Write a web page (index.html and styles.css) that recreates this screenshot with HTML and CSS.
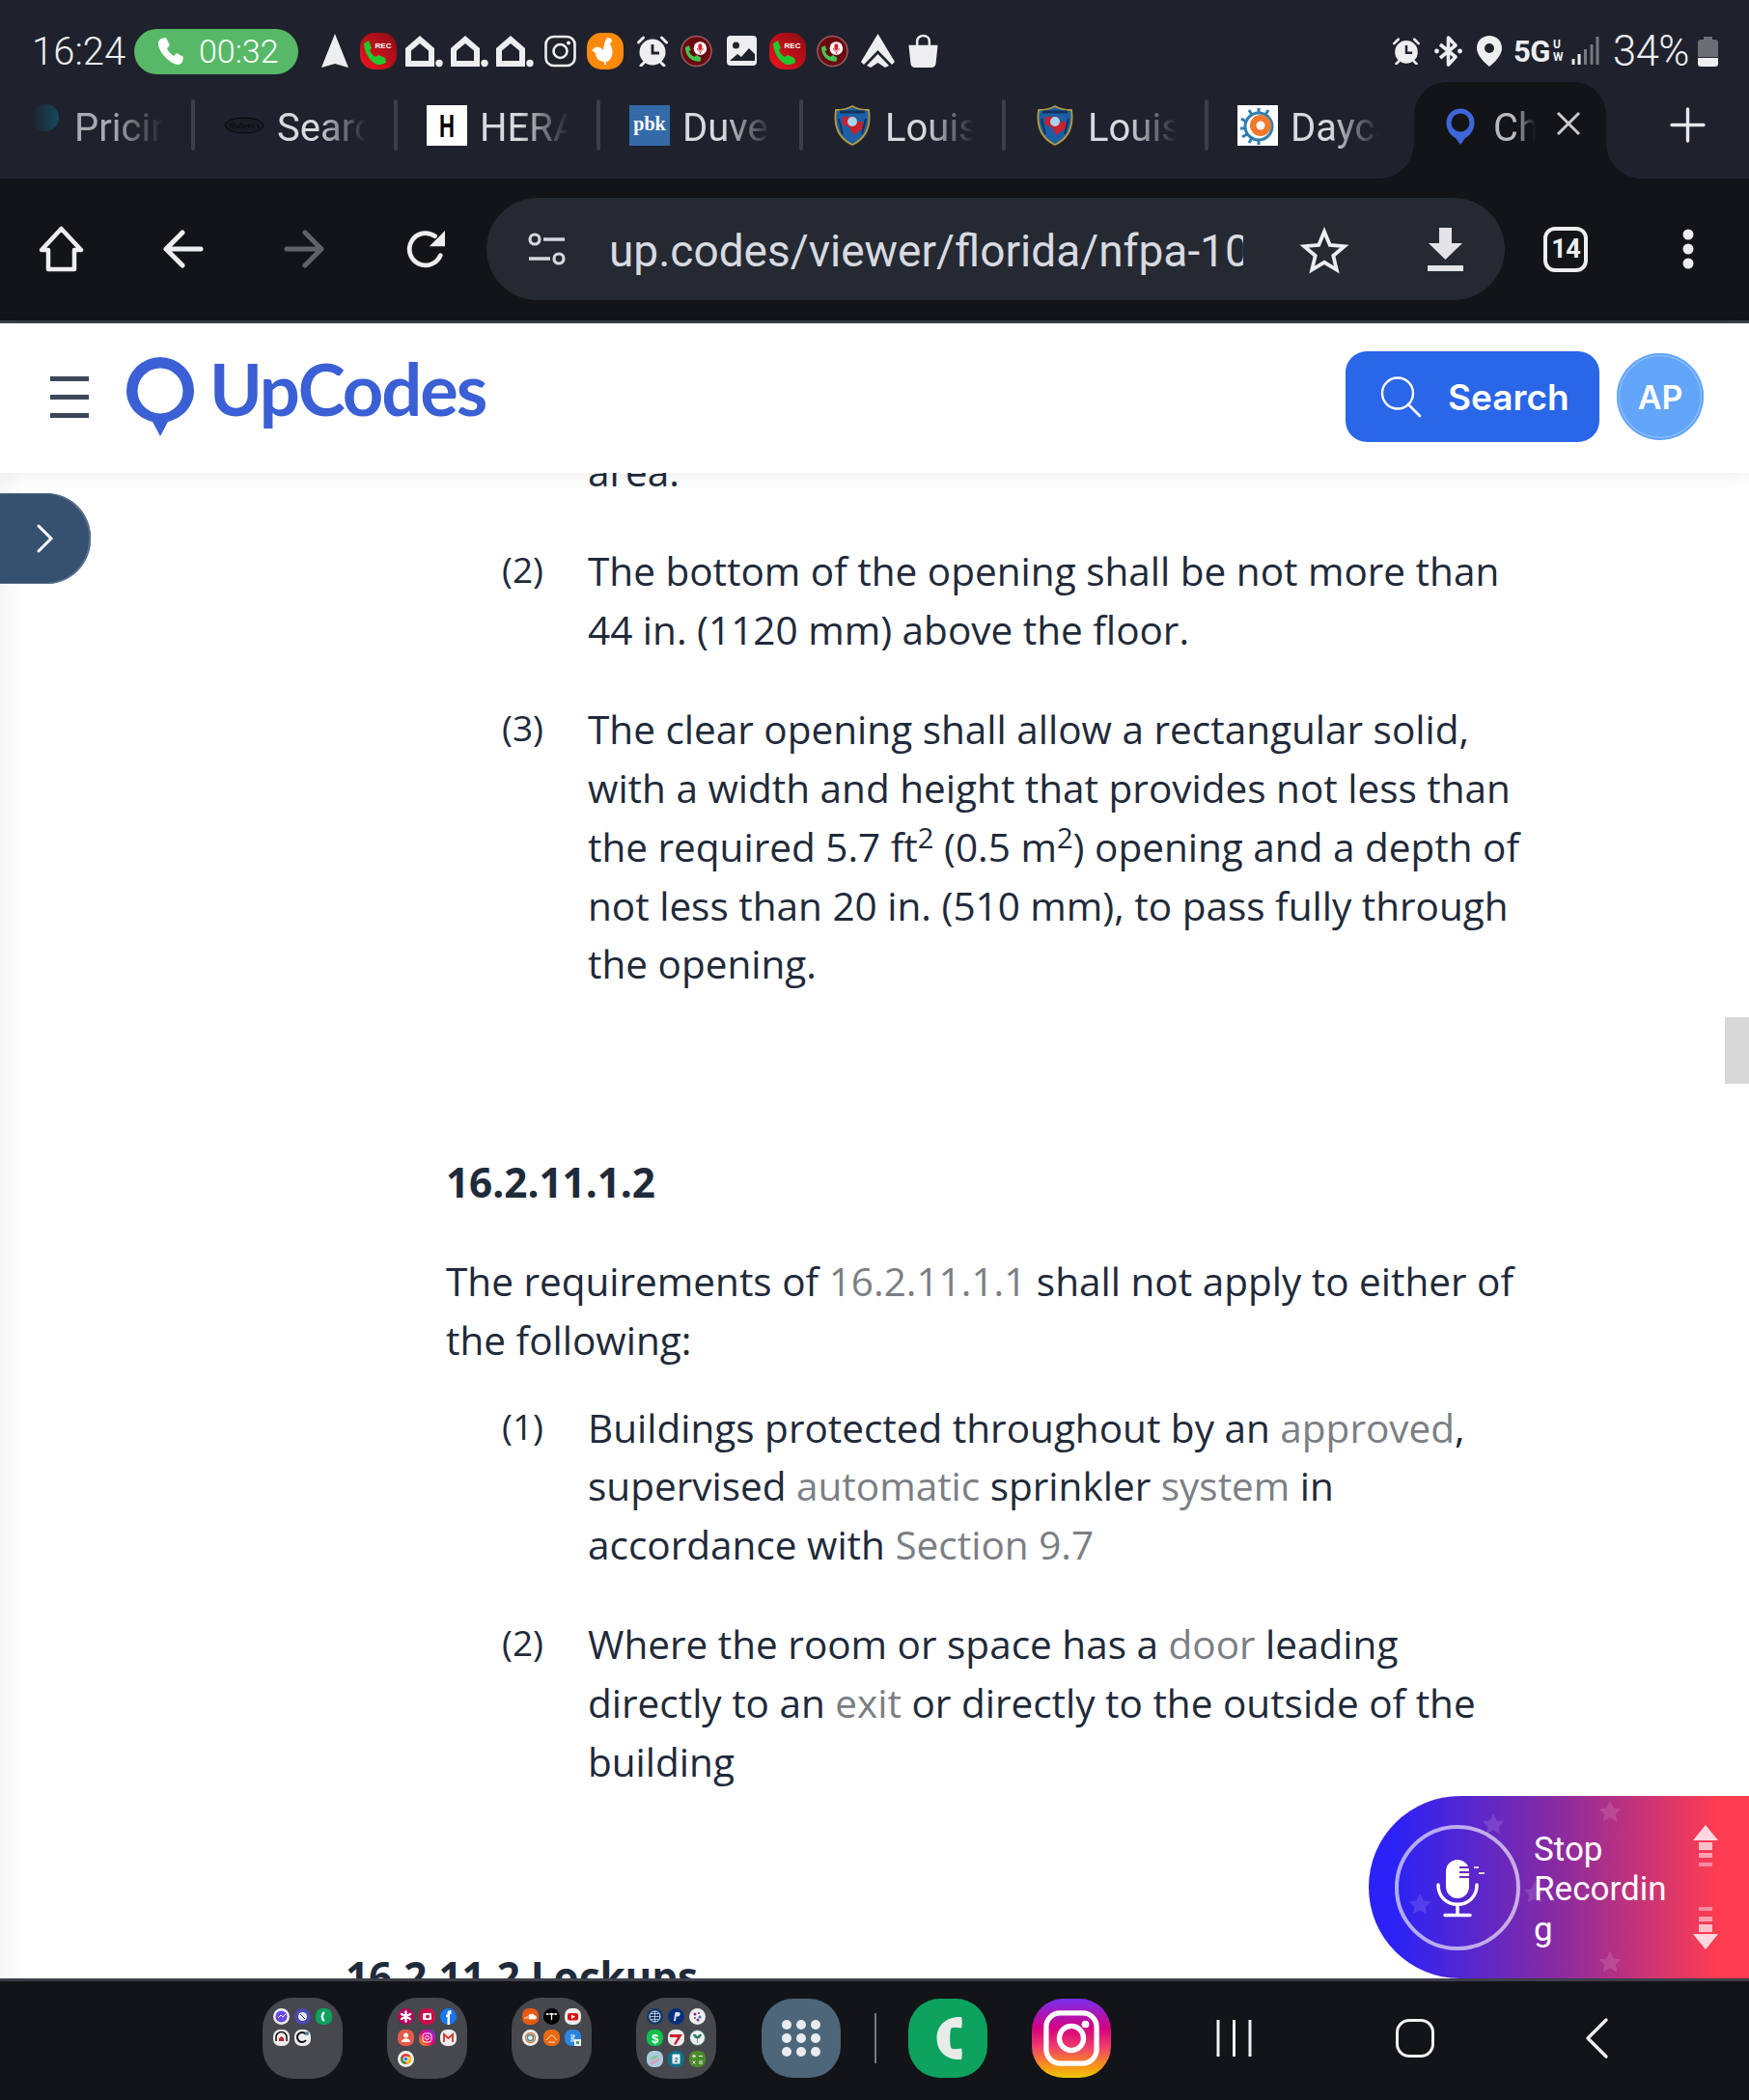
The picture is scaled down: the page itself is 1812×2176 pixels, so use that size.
FILE: index.html
```html
<!DOCTYPE html>
<html lang="en">
<head>
<meta charset="utf-8">
<title>UpCodes</title>
<link rel="stylesheet" href="styles.css">
</head>
<body>
<svg class="sprite" aria-hidden="true">
  <defs>
    <linearGradient id="redg" x1="0" y1="1" x2="1" y2="0"><stop offset="0" stop-color="#f01420"/><stop offset="1" stop-color="#8a0c14"/></linearGradient>
    <linearGradient id="igg" x1="0" y1="1" x2="1" y2="0"><stop offset="0" stop-color="#f5b400"/><stop offset=".5" stop-color="#e6007e"/><stop offset="1" stop-color="#7a2ff0"/></linearGradient>
    <symbol id="rec" viewBox="0 0 38 38"><rect width="38" height="38" rx="15" fill="url(#redg)"/><path d="M4 11l5-3 3 8-2 2c1 3 3 5 6 7l3-2 7 3 1 5-6 2C14 34 5 24 4 11z" fill="#22c92c"/><text x="24" y="16" font-family="Liberation Sans" font-weight="700" font-size="8" fill="#fff" text-anchor="middle">REC</text></symbol>
    <symbol id="hut" viewBox="0 0 39 33"><path fill="#eeeef0" fill-rule="evenodd" d="M0 32V13L15 0l15 13v19zM6 26h18V15.500L15 8 6 15.500z"/><circle cx="35" cy="28.500" r="3.700" fill="#eeeef0"/></symbol>
    <symbol id="alarm" viewBox="0 0 32 32"><circle cx="16" cy="17" r="13.500" fill="#eeeef0"/><path d="M1.500 7l5-5M30.500 7l-5-5M4 31l3-3M28 31l-3-3" stroke="#eeeef0" stroke-width="3" stroke-linecap="round"/><path d="M16 9v9h7" fill="none" stroke="#1f222c" stroke-width="2.800"/></symbol>
    <symbol id="redcall" viewBox="0 0 34 34"><circle cx="17" cy="17" r="16" fill="#6a0a0f" stroke="#9a5a5e" stroke-width="1.600"/><path d="M5 13l4-2 2 5-2 1c1 3 3 5 6 6l2-2 5 3-1 4C12 29 5 22 5 13z" fill="#3fc653"/><circle cx="21" cy="14" r="7" fill="#fff"/><rect x="19" y="9" width="4" height="7" rx="2" fill="#d8202a"/><path d="M18 14c0 4 6 4 6 0M21 18v2" fill="none" stroke="#d8202a" stroke-width="1"/></symbol>
    <symbol id="shield" viewBox="0 0 38 42"><path d="M19 1c5 3 11 4 17 4 2 14 0 28-17 36C2 33 0 19 2 5c6 0 12-1 17-4z" fill="#1c5fa6" stroke="#b69a3a" stroke-width="1.800"/><path d="M9 12h13l2 5h6v7l-6 4-4 3-4-8-7-3z" fill="#c8202c"/><circle cx="19" cy="17" r="5" fill="#a8d4ea"/><path d="M6 7h26" stroke="#12325a" stroke-width="3"/><path d="M5 14l4 16M33 14l-4 16" stroke="#12325a" stroke-width="2"/></symbol>
    <symbol id="back" viewBox="0 0 43 40"><path d="M40 20H4M21 3L4 20l17 17" fill="none" stroke="currentColor" stroke-width="5" stroke-linecap="round" stroke-linejoin="round"/></symbol>
    <symbol id="star" viewBox="0 0 17 17"><path d="M8.500 2l2 4.500 4.500.5-3.300 3 1 4.500-4.200-2.400-4.200 2.400 1-4.500L2 7l4.500-.5z"/></symbol>
  </defs>
</svg>

<header class="status">
  <span class="clock">16:24</span>
  <span class="call-pill">
    <svg class="call-icon" viewBox="0 0 30 30"><path d="M6 2l5-1 4 8-3 3c1 3 4 6 7 8l3-3 7 4-1 5c-1 2-3 3-5 3C13 27 3 15 3 7c0-2 1-4 3-5z" fill="#fff"/></svg>
    <span>00:32</span>
  </span>
  <div class="notif">
    <svg class="i30" viewBox="0 0 30 36"><path d="M15 0l14 35-14-4-14 4z" fill="#eeeef0"/></svg>
    <svg class="i38"><use href="#rec"/></svg>
    <svg class="ihut"><use href="#hut"/></svg>
    <svg class="ihut"><use href="#hut"/></svg>
    <svg class="ihut"><use href="#hut"/></svg>
    <svg class="i33" viewBox="0 0 33 33"><rect x="1.500" y="1.500" width="30" height="30" rx="8" fill="none" stroke="#eeeef0" stroke-width="2.600"/><circle cx="16.500" cy="16.500" r="7" fill="none" stroke="#eeeef0" stroke-width="2.600"/><circle cx="25" cy="8" r="2" fill="#eeeef0"/></svg>
    <svg class="i38" viewBox="0 0 38 38"><rect width="38" height="38" rx="15" fill="#ff8a0a"/><path d="M21 5l4 1 1 3-2 2c2 5 4 10 1 15-2 3-4 4-5 4v3h-2v-3c-5 0-9-4-9-9l-4-3 4-3c3-1 6 0 8 3 1-5 1-9 4-13z" fill="#fff"/></svg>
    <svg class="i32"><use href="#alarm"/></svg>
    <svg class="i33"><use href="#redcall"/></svg>
    <svg class="i32" viewBox="0 0 32 32"><rect width="31" height="31" rx="4" fill="#eeeef0"/><circle cx="9.500" cy="10" r="3.500" fill="#1f222c"/><path d="M3 26l8-7 4 3 8-9 6 6v7z" fill="#1f222c"/></svg>
    <svg class="i38"><use href="#rec"/></svg>
    <svg class="i33"><use href="#redcall"/></svg>
    <svg class="i37" viewBox="0 0 37 37"><path d="M18.500 0L36 29l-3 3-14.500-15L4 32l-3-3z" fill="#eeeef0"/><path d="M18.500 21L30 33l-4 2-7.500-5-7.500 5-4-2z" fill="#eeeef0"/></svg>
    <svg class="i33" viewBox="0 0 33 35"><path d="M1 11h31l-2 19c0 3-2 5-5 5H8c-3 0-5-2-5-5z" fill="#eeeef0"/><path d="M10 13V7c0-8 13-8 13 0v6" fill="none" stroke="#eeeef0" stroke-width="2.600"/></svg>
  </div>
  <div class="sys">
    <svg class="i28" viewBox="0 0 32 32"><use href="#alarm"/></svg>
    <svg class="i29" viewBox="0 0 29 32"><path d="M6 9l16 13-7.500 8V2l7.500 8L6 23" fill="none" stroke="#eeeef0" stroke-width="3.600" stroke-linejoin="round"/><circle cx="2.500" cy="16" r="2.400" fill="#eeeef0"/><circle cx="26.500" cy="16" r="2.400" fill="#eeeef0"/></svg>
    <svg class="i26" viewBox="0 0 26 32"><path fill="#eeeef0" fill-rule="evenodd" d="M13 0c7 0 13 5 13 13 0 7-7 14-13 19C7 27 0 20 0 13 0 5 6 0 13 0zm0 8a5 5 0 100 10 5 5 0 000-10z"/></svg>
    <span class="fiveg">5G</span>
    <span class="uw">U<br>W</span>
    <svg class="i28" viewBox="0 0 28 30"><g stroke-width="3"><path d="M2 29v-6M8 29V18" stroke="#eeeef0"/><path d="M14.500 29V13M21 29V8M27 29V0" stroke="#77797f"/></g></svg>
    <span class="batt-text">34%</span>
    <svg class="batt" viewBox="0 0 21 31"><path d="M6 0h9v3h3c2 0 3 1 3 3v15H0V6c0-2 1-3 3-3h3z" fill="#6c6e76"/><path d="M0 22h21v6c0 2-1 3-3 3H3c-2 0-3-1-3-3z" fill="#eeeef0"/></svg>
  </div>
</header>

<nav class="tabs">
  <div class="tab tab-dim"><svg class="favicon" viewBox="0 0 42 42"><defs><linearGradient id="fd" x1="1" x2="0"><stop offset="0" stop-color="#114a5c"/><stop offset="1" stop-color="#1f222c"/></linearGradient></defs><circle cx="25" cy="13" r="14" fill="url(#fd)"/></svg><span class="tab-title">Pricing</span></div>
  <div class="tab"><svg class="favicon" viewBox="0 0 42 42"><ellipse cx="21" cy="21" rx="20" ry="8" fill="#1b1d25" stroke="#05060a"/><text x="21" y="23.500" font-family="Liberation Serif" font-size="8" fill="#05060a" text-anchor="middle">Shaheen's</text></svg><span class="tab-title">Search</span></div>
  <div class="tab"><svg class="favicon" viewBox="0 0 42 42"><rect width="42" height="42" fill="#fff"/><text x="21" y="33" font-family="Liberation Sans" font-weight="700" font-size="34" fill="#000" text-anchor="middle" textLength="16" lengthAdjust="spacingAndGlyphs">H</text></svg><span class="tab-title">HERALD</span></div>
  <div class="tab"><svg class="favicon" viewBox="0 0 42 42"><rect width="42" height="42" fill="#346aa8"/><text x="21" y="26" font-family="Liberation Serif" font-weight="700" font-size="20" fill="#fff" text-anchor="middle">pbk</text></svg><span class="tab-title">Duvel</span></div>
  <div class="tab"><svg class="favicon"><use href="#shield"/></svg><span class="tab-title">Louisiana</span></div>
  <div class="tab"><svg class="favicon"><use href="#shield"/></svg><span class="tab-title">Louisiana</span></div>
  <div class="tab tab-last"><svg class="favicon" viewBox="0 0 42 42"><rect width="42" height="42" fill="#fff"/><circle cx="22" cy="22" r="14" fill="none" stroke="#2f7fb0" stroke-width="3"/><path d="M22 3v6M12 5l3 5M32 5l-3 5M4 14l5 3M3 24h6M5 33l5-3M12 39l3-5M22 41v-6" stroke="#2f7fb0" stroke-width="3"/><circle cx="24" cy="21" r="11" fill="#f07a2a"/><circle cx="24" cy="21" r="4.500" fill="#fff"/></svg><span class="tab-title">Daycare</span></div>
  <div class="tab-active">
    <svg class="active-pin" viewBox="0 0 32 40"><path d="M16 39l-5-7C5 29 1.500 23 1.500 16a14.500 14.500 0 0129 0c0 7-3.500 13-9.500 16z" fill="#3f66d8"/><circle cx="16" cy="16" r="9.500" fill="#121418"/></svg>
    <span class="tab-title active-title">Check</span>
    <svg class="close" viewBox="0 0 26 26"><path d="M2 2l22 22M24 2L2 24" stroke="#c9cbd0" stroke-width="3"/></svg>
  </div>
  <svg class="plus" viewBox="0 0 35 35"><path d="M17.500 1v33M1 17.500h33" stroke="#e8e8ea" stroke-width="3.400" stroke-linecap="round"/></svg>
</nav>

<div class="toolbar">
  <span class="slot"><svg class="tb47" viewBox="0 0 47 48"><path d="M23.500 3L44 25h-7v20H10V25H3z" fill="none" stroke="#eeeef0" stroke-width="4.500" stroke-linejoin="round"/></svg></span>
  <span class="slot"><svg class="tb43"><use href="#back"/></svg></span>
  <span class="slot slot-dim"><svg class="tb43 flip"><use href="#back"/></svg></span>
  <span class="slot"><svg class="tb43" viewBox="0 0 43 42"><path d="M37 28A17.500 17.500 0 1131 7" fill="none" stroke="#eeeef0" stroke-width="5" stroke-linecap="round"/><path d="M42 1v17H25z" fill="#eeeef0"/></svg></span>
  <div class="address">
    <svg class="site" viewBox="0 0 39 34"><circle cx="7" cy="7" r="5" fill="none" stroke="#d6d8de" stroke-width="3.200"/><path d="M16 7h22M1 27h22" stroke="#d6d8de" stroke-width="3.600"/><circle cx="32" cy="27" r="5" fill="none" stroke="#d6d8de" stroke-width="3.200"/></svg>
    <span class="url">up.codes/viewer/florida/nfpa-101</span>
    <svg class="addr-star" viewBox="0 0 46 44"><path d="M23 4l5.800 14 15 1.200-11.500 9.800 3.500 14.600L23 35.800 10.200 43.600l3.500-14.600L2.200 19.200l15-1.200z" fill="none" stroke="#eeeef0" stroke-width="3.800" stroke-linejoin="miter"/></svg>
    <svg class="addr-dl" viewBox="0 0 37 45"><path d="M12 0h13v16h11L18.500 33 1 16h11zM0 39h37v6H0z" fill="#e4e4e8"/></svg>
  </div>
  <span class="slot"><span class="tab-count">14</span></span>
  <span class="slot"><svg class="dots" viewBox="0 0 12 42"><circle cx="6" cy="6" r="5.500"/><circle cx="6" cy="21" r="5.500"/><circle cx="6" cy="36" r="5.500"/></svg></span>
</div>
<div class="rule"></div>

<header class="site-head">
  <div class="burger"><i></i><i></i><i></i></div>
  <svg class="logo-pin" viewBox="0 0 70 82"><path d="M35 82l-8-15C11 63 0 50 0 35a35 35 0 0170 0c0 15-11 28-27 32z" fill="#3b5fd4"/><circle cx="35" cy="35" r="23.500" fill="#fff"/></svg>
  <span class="wordmark">UpCodes</span>
  <button class="search-btn"><svg class="search-icon" viewBox="0 0 42 42"><circle cx="18" cy="17.500" r="16" fill="none" stroke="#fff" stroke-width="2.400"/><path d="M29 29l12 12" stroke="#fff" stroke-width="2.600" stroke-linecap="round"/></svg>Search</button>
  <span class="avatar">AP</span>
</header>

<main class="main">
  <article class="article">
    <ol class="clause first">
      <li class="item item-cont"><span class="item-text">area.</span></li>
      <li class="item"><span class="item-label">(2)</span><span class="item-text">The bottom of the opening shall be not more than 44 in. (1120 mm) above the floor.</span></li>
      <li class="item"><span class="item-label">(3)</span><span class="item-text">The clear opening shall allow a rectangular solid, with a width and height that provides not less than the required 5.7 ft<sup>2</sup> (0.5 m<sup>2</sup>) opening and a depth of not less than 20 in. (510 mm), to pass fully through the opening.</span></li>
    </ol>
    <h3 class="sec-title">16.2.11.1.2</h3>
    <p class="para">The requirements of <a class="ref">16.2.11.1.1</a> shall not apply to either of the following:</p>
    <ol class="clause">
      <li class="item"><span class="item-label">(1)</span><span class="item-text">Buildings protected throughout by an <a class="ref">approved</a>, supervised <a class="ref">automatic</a> sprinkler <a class="ref">system</a> in accordance with <a class="ref">Section 9.7</a></span></li>
      <li class="item"><span class="item-label">(2)</span><span class="item-text">Where the room or space has a <a class="ref">door</a> leading directly to an <a class="ref">exit</a> or directly to the outside of the building</span></li>
    </ol>
    <h2 class="next-title">16.2.11.2 Lockups</h2>
  </article>

  <div class="side-toggle"><svg viewBox="0 0 17 30"><path d="M2 2l13 13L2 28" fill="none" stroke="#fff" stroke-width="3" stroke-linecap="round"/></svg></div>
  <div class="scroll-thumb"></div>

  <aside class="recorder">
    <svg class="rec-stars" viewBox="0 0 394 189">
      <g fill="#fff" fill-opacity=".13">
        <use href="#star" x="114" y="14" width="30" height="30"/>
        <use href="#star" x="235" y="1" width="30" height="30"/>
        <use href="#star" x="38" y="97" width="30" height="30"/>
        <use href="#star" x="157" y="85" width="30" height="30"/>
        <use href="#star" x="235" y="157" width="30" height="30"/>
      </g>
    </svg>
    <div class="rec-ring">
      <svg viewBox="0 0 50 60" class="rec-mic"><rect x="10" y="1" width="24" height="40" rx="12" fill="#fff"/><path d="M24 9h10M24 14h10M24 19h10" stroke="#6a28b8" stroke-width="2"/><path d="M2 27c0 27 40 27 40 0" fill="none" stroke="#fff" stroke-width="3.500" stroke-linecap="round"/><path d="M22 48v10M9 58.500h26" stroke="#fff" stroke-width="3.500" stroke-linecap="round"/><path d="M39 9h5M44 15h6" stroke="#fff" stroke-opacity=".8" stroke-width="2"/></svg>
    </div>
    <span class="rec-text">Stop Recording</span>
    <div class="rec-arrows">
      <svg viewBox="0 0 26 45"><path d="M13 0l13 16H0z" fill="#ffd8df"/><path d="M6 18h14v8H6z" fill="#ffc0cb"/><path d="M6 29h14v5H6z" fill="#ff9fb0"/><path d="M6 39h14v4H6z" fill="#f88ba0"/></svg>
      <svg viewBox="0 0 26 45"><path d="M13 45L0 29h26z" fill="#ffd8df"/><path d="M6 19h14v8H6z" fill="#ffc0cb"/><path d="M6 11h14v5H6z" fill="#ff9fb0"/><path d="M6 1h14v4H6z" fill="#f88ba0"/></svg>
    </div>
  </aside>
</main>

<footer class="dock">
  <div class="folder">
    <svg class="mini" viewBox="0 0 17 17"><circle cx="8.500" cy="8.500" r="8.500" fill="#ededed"/><circle cx="8.500" cy="8.500" r="6" fill="#6a4ae8"/><path d="M5 10l3-3 2 2 3-3" stroke="#fff" fill="none"/></svg>
    <svg class="mini" viewBox="0 0 17 17"><circle cx="8.500" cy="8.500" r="8.500" fill="#4a4ab0"/><circle cx="8.500" cy="8.500" r="4.500" fill="#e8e8f0"/><path d="M6 6l5 5" stroke="#30306a"/></svg>
    <svg class="mini" viewBox="0 0 17 17"><rect width="17" height="17" rx="7" fill="#0da25e"/><path d="M9 4c-3 2-3 7 0 9" stroke="#fff" stroke-width="2.400" fill="none"/></svg>
    <svg class="mini" viewBox="0 0 17 17"><rect width="17" height="17" rx="7" fill="#eee"/><path d="M3 12V8a5.500 5.500 0 0111 0v4" fill="none" stroke="#111" stroke-width="1.500"/><path d="M6 12V9l2.500-2L11 9v3z" fill="#c8202c"/></svg>
    <svg class="mini" viewBox="0 0 17 17"><rect width="17" height="17" rx="7" fill="#eee"/><path d="M12 5a5 5 0 100 6" fill="none" stroke="#111" stroke-width="2"/><circle cx="13" cy="4" r="2" fill="#48a"/></svg>
  </div>
  <div class="folder">
    <svg class="mini" viewBox="0 0 17 17"><circle cx="8.500" cy="8.500" r="8.500" fill="#b8005e"/><path d="M8.500 3.500v10M4 6l9 5M13 6l-9 5" stroke="#fff" stroke-width="2.400" stroke-linecap="round"/></svg>
    <svg class="mini" viewBox="0 0 17 17"><rect width="17" height="17" rx="7" fill="#c8104a"/><rect x="4" y="5" width="9" height="7" rx="1.500" fill="#fff"/><circle cx="9" cy="8.500" r="2" fill="#c8104a"/></svg>
    <svg class="mini" viewBox="0 0 17 17"><circle cx="8.500" cy="8.500" r="8.500" fill="#1877f2"/><path d="M11.500 6H10v11H7.500V9H6V6.500h1.500V5c0-2 1-3 4-3z" fill="#fff"/></svg>
    <svg class="mini" viewBox="0 0 17 17"><rect width="17" height="17" rx="7" fill="#e85a4a"/><circle cx="8.500" cy="6" r="2.500" fill="#fff"/><path d="M4 13c0-5 9-5 9 0z" fill="#fff"/></svg>
    <svg class="mini" viewBox="0 0 17 17"><rect width="17" height="17" rx="7" fill="url(#igg)"/><rect x="4" y="4" width="9" height="9" rx="2.500" fill="none" stroke="#fff"/><circle cx="8.500" cy="8.500" r="2" fill="none" stroke="#fff"/></svg>
    <svg class="mini" viewBox="0 0 17 17"><rect width="17" height="17" rx="7" fill="#eee"/><path d="M4 13V5l4.500 4L13 5v8" fill="none" stroke="#d8322a" stroke-width="1.800"/></svg>
    <svg class="mini" viewBox="0 0 17 17"><circle cx="8.500" cy="8.500" r="8.500" fill="#eee"/><circle cx="8.500" cy="8.500" r="5.500" fill="#e0382c"/><path d="M8.500 14A5.500 5.500 0 014 6l3 4z" fill="#2a9a48"/><path d="M8.500 14a5.500 5.500 0 005-8H9z" fill="#f5c010"/><circle cx="8.500" cy="8.500" r="2.400" fill="#3a78e8" stroke="#fff"/></svg>
  </div>
  <div class="folder">
    <svg class="mini" viewBox="0 0 17 17"><rect width="17" height="17" rx="7" fill="#e85a12"/><path d="M3 11V9M5 11V8M7 11V7c3-2 6 0 6 1 2 0 2 3 0 3z" stroke="#fff" fill="#fff" stroke-width=".8"/></svg>
    <svg class="mini" viewBox="0 0 17 17"><circle cx="8.500" cy="8.500" r="8.500" fill="#000"/><path d="M4 6h9M8.500 6v6" stroke="#fff" stroke-width="1.200"/><circle cx="4" cy="6" r="1" fill="#fff"/><circle cx="13" cy="6" r="1" fill="#fff"/><circle cx="8.500" cy="6" r="1.300" fill="#fff"/></svg>
    <svg class="mini" viewBox="0 0 17 17"><rect width="17" height="17" rx="7" fill="#eee"/><rect x="3" y="5" width="11" height="7.500" rx="2" fill="#e01010"/><path d="M7 6.500v4.500l4-2.200z" fill="#fff"/></svg>
    <svg class="mini" viewBox="0 0 17 17"><circle cx="8.500" cy="8.500" r="8.500" fill="#eee"/><circle cx="8.500" cy="8.500" r="5" fill="none" stroke="#d87030" stroke-width="1.300"/><circle cx="8.500" cy="8.500" r="3" fill="none" stroke="#3a8a8a" stroke-width="1.300"/></svg>
    <svg class="mini" viewBox="0 0 17 17"><rect width="17" height="17" rx="7" fill="#e86a10"/><path d="M3 11c2-1 3-5 5.500-5S12 10 14 11M5 13h7" stroke="#fff" fill="none" stroke-width=".8"/></svg>
    <svg class="mini" viewBox="0 0 17 17"><rect width="17" height="17" rx="7" fill="#2a86e0"/><path d="M6 6h4v2H7v2h3v2H6" fill="none" stroke="#fff"/><rect x="10" y="10" width="7" height="7" fill="#eee"/><rect x="12" y="12" width="3" height="3" fill="#48a060"/></svg>
  </div>
  <div class="folder">
    <svg class="mini" viewBox="0 0 17 17"><circle cx="8.500" cy="8.500" r="8.500" fill="#12386a"/><circle cx="8.500" cy="8.500" r="5.500" fill="none" stroke="#dfe6ee"/><path d="M3 8.500h11M8.500 3v11M4 5.500h9M4 11.500h9" stroke="#dfe6ee" stroke-width=".7"/></svg>
    <svg class="mini" viewBox="0 0 17 17"><circle cx="8.500" cy="8.500" r="8.500" fill="#08307a"/><path d="M6 13l1.500-9h3.500c2.500 0 2.500 4-1 4.500H8.500L8 13z" fill="#d8e2f5"/></svg>
    <svg class="mini" viewBox="0 0 17 17"><circle cx="8.500" cy="8.500" r="8.500" fill="#eee"/><g fill="#8a2a80"><circle cx="6" cy="6" r="1.500"/><circle cx="10" cy="5" r="1"/><circle cx="6" cy="10" r="1"/><circle cx="9" cy="12" r="1.500"/></g><circle cx="11" cy="9" r="1.500" fill="#3a78c8"/></svg>
    <svg class="mini" viewBox="0 0 17 17"><rect width="17" height="17" rx="7" fill="#0cc14c"/><text x="8.500" y="13.500" font-family="Liberation Sans" font-weight="700" font-size="13" fill="#fff" text-anchor="middle">$</text></svg>
    <svg class="mini" viewBox="0 0 17 17"><rect width="17" height="17" rx="7" fill="#eee"/><path d="M2 5h13L8 16l-2-1 4-7H2z" fill="#cc1f2c"/></svg>
    <svg class="mini" viewBox="0 0 17 17"><circle cx="8.500" cy="8.500" r="8" fill="#eee" stroke="#2a6a6a"/><path d="M8.500 14V7M8.500 9c-3 0-4-2-4-4 3 0 4 2 4 4zM8.500 9c3 0 4-2 4-4-3 0-4 2-4 4z" fill="#2a8a5a" stroke="#205050" stroke-width=".5"/></svg>
    <svg class="mini" viewBox="0 0 17 17"><rect width="17" height="17" rx="7" fill="#a8cce0"/><path d="M3 12l10-5v3L5 15z" fill="#d8a0c0"/><path d="M4 7l8-3v2L5 10z" fill="#80c890"/></svg>
    <svg class="mini" viewBox="0 0 17 17"><rect width="17" height="17" rx="7" fill="#10708a"/><rect x="4.500" y="3.500" width="8" height="10" rx="1" fill="#eaf2f5"/><text x="8.500" y="12" font-family="Liberation Sans" font-weight="700" font-size="7" fill="#10708a" text-anchor="middle">2</text></svg>
    <svg class="mini" viewBox="0 0 17 17"><rect width="17" height="17" rx="7" fill="#4a8a2a"/><path d="M3 5.500h4M5 3.500v4M10 5.500h4M3.500 10.500l3 3M6.500 10.500l-3 3M10 11h4M10 13h4" stroke="#eee" stroke-width="1"/></svg>
  </div>
  <div class="apps">
    <svg viewBox="0 0 44 42"><g fill="#e8ecef"><circle cx="7" cy="7" r="5"/><circle cx="22" cy="7" r="5"/><circle cx="37" cy="7" r="5"/><circle cx="7" cy="21" r="5"/><circle cx="22" cy="21" r="5"/><circle cx="37" cy="21" r="5"/><circle cx="7" cy="35" r="5"/><circle cx="22" cy="35" r="5"/><circle cx="37" cy="35" r="5"/></g></svg>
  </div>
  <div class="dock-sep"></div>
  <div class="phone"><svg viewBox="0 0 34 54"><path d="M33 2C15 1 4 12 4 27s11 26 29 25c1-4 1-9 0-13-6 1-10 1-12 0-2-3-2-21 0-24 2-1 6-1 12 0 1-4 1-9 0-13z" fill="#e8ece9"/></svg></div>
  <div class="insta"><svg viewBox="0 0 60 60"><rect x="3" y="3" width="54" height="54" rx="15" fill="none" stroke="#fff" stroke-width="5.500"/><circle cx="30" cy="30" r="13" fill="none" stroke="#fff" stroke-width="5.500"/><circle cx="45" cy="15" r="4" fill="#fff"/></svg></div>
  <svg class="nav-recents" viewBox="0 0 37 38"><path d="M2 0v38M18.500 0v38M35 0v38" stroke="#f0f0f2" stroke-width="3"/></svg>
  <div class="nav-home"></div>
  <svg class="nav-back" viewBox="0 0 24 42"><path d="M22 2L3 21l19 19" fill="none" stroke="#f0f0f2" stroke-width="3.400" stroke-linecap="round" stroke-linejoin="round"/></svg>
</footer>
</body>
</html>
```

FILE: styles.css
```css
* { box-sizing: border-box; }
html, body { margin: 0; padding: 0; }
body {
  width: 1812px;
  height: 2176px;
  overflow: hidden;
  display: flex;
  flex-direction: column;
  background: #fff;
  font-family: "Open Sans", sans-serif;
  color: #1f2a3a;
}
svg { display: block; flex: none; overflow: visible; }
.sprite { position: absolute; width: 0; height: 0; }

/* status bar */
.status {
  height: 85px;
  flex: none;
  padding: 21px 32px 0 33px;
  display: flex;
  align-items: center;
  background: #1f222c;
  color: #eeeef0;
  font-family: Roboto, sans-serif;
}
.clock { width: 106px; font-size: 40px; font-weight: 300; }
.call-pill {
  width: 170px;
  height: 47px;
  border-radius: 24px;
  background: #57b967;
  display: flex;
  align-items: center;
  padding-left: 22px;
  gap: 15px;
  font-size: 34px;
  font-weight: 300;
  color: #fff;
}
.call-icon { width: 30px; height: 30px; }
.notif {
  margin-left: 23px;
  display: grid;
  grid-template-columns: 41px 47px 47px 47px 50px 44px 52px 45px 48px 44px 49px 45px 49px 33px;
  align-items: center;
}
.i26 { width: 26px; height: 32px; }
.i28 { width: 28px; height: 30px; }
.i29 { width: 29px; height: 32px; }
.i30 { width: 30px; height: 36px; }
.i32 { width: 32px; height: 32px; }
.i33 { width: 33px; height: 34px; }
.i37 { width: 37px; height: 37px; }
.i38 { width: 38px; height: 38px; }
.ihut { width: 39px; height: 33px; }
.sys {
  margin-left: auto;
  display: grid;
  grid-template-columns: 43px 44px 38px 41px 19px 43px 88px 21px;
  align-items: center;
}
.fiveg { font-size: 31px; font-weight: 700; letter-spacing: -.5px; }
.uw { font-size: 12px; font-weight: 700; line-height: 13px; }
.batt-text { font-size: 43.500px; font-weight: 300; letter-spacing: -.5px; }
.batt { width: 21px; height: 31px; }

/* tabs */
.tabs {
  height: 100px;
  flex: none;
  display: flex;
  position: relative;
  background: #1f222c;
  font-family: Roboto, sans-serif;
}
.tab {
  width: 210px;
  height: 100px;
  flex: none;
  display: flex;
  align-items: flex-start;
  padding: 24px 0 0 22px;
  gap: 13px;
  position: relative;
}
.tab:first-child { width: 200px; padding-left: 22px; }
.tab::after {
  content: "";
  position: absolute;
  right: -2px;
  top: 18px;
  width: 4px;
  height: 53px;
  border-radius: 2px;
  background: #3c3f49;
}
.tab:nth-child(n+2) { padding-left: 32px; }
.tab-last::after { display: none; }
.favicon { width: 42px; height: 42px; }
.tab-title {
  width: 92px;
  overflow: hidden;
  white-space: nowrap;
  font-size: 40px;
  line-height: 42px;
  margin-top: 3px;
  color: #d8dade;
  -webkit-mask-image: linear-gradient(90deg, #000 45%, transparent 100%);
  mask-image: linear-gradient(90deg, #000 45%, transparent 100%);
}
.tab-dim .tab-title { color: #a8aab0; }
.tab-active {
  width: 199px;
  height: 100px;
  flex: none;
  margin-left: 5px;
  position: relative;
  background: #121418;
  border-radius: 34px 34px 0 0;
  display: flex;
  align-items: flex-start;
  padding: 26px 0 0 32px;
}
.tab-active::before, .tab-active::after {
  content: "";
  position: absolute;
  bottom: 0;
  width: 36px;
  height: 36px;
}
.tab-active::before {
  left: -36px;
  background: radial-gradient(circle at 0 0, transparent 35.500px, #121418 36px);
}
.tab-active::after {
  right: -36px;
  background: radial-gradient(circle at 100% 0, transparent 35.500px, #121418 36px);
}
.active-pin { width: 32px; height: 40px; }
.active-title { width: 44px; margin-left: 18px; margin-top: 1px; color: #b8bac0; -webkit-mask-image: linear-gradient(90deg, #000 50%, transparent 100%); mask-image: linear-gradient(90deg, #000 50%, transparent 100%); }
.close { width: 26px; height: 26px; margin: 4px 0 0 21px; }
.plus { width: 35px; height: 35px; margin: 27px 0 0 67px; }

/* toolbar */
.toolbar {
  height: 147px;
  flex: none;
  display: flex;
  align-items: center;
  background: #121418;
  color: #eeeef0;
  font-family: Roboto, sans-serif;
  padding-bottom: 1px;
}
.slot { width: 126px; flex: none; display: flex; justify-content: center; align-items: center; }
.slot-dim { color: #606268; }
.slot:nth-last-child(1), .slot:nth-last-child(2) { width: 126.500px; }
.tb47 { width: 47px; height: 48px; }
.tb43 { width: 43px; height: 40px; }
.flip { transform: scaleX(-1); }
.address {
  width: 1055px;
  height: 106px;
  flex: none;
  border-radius: 53px;
  background: #252932;
  display: flex;
  align-items: center;
  padding-left: 43px;
}
.site { width: 39px; height: 34px; }
.url {
  width: 657px;
  margin: 3px 0 0 45px;
  overflow: hidden;
  white-space: nowrap;
  font-size: 46px;
  color: #d8dae0;
}
.addr-star { width: 46px; height: 44px; margin-left: 61px; }
.addr-dl { width: 37px; height: 45px; margin-left: 84px; }
.tab-count {
  width: 46px;
  height: 47px;
  border: 4.500px solid #eeeef0;
  border-radius: 12px;
  display: flex;
  align-items: center;
  justify-content: center;
  font-size: 27px;
  font-weight: 700;
  letter-spacing: -.5px;
}
.dots { width: 12px; height: 42px; fill: #eeeef0; }
.rule { height: 3px; flex: none; background: #3c3f49; }

/* site header */
.site-head {
  height: 155px;
  flex: none;
  display: flex;
  align-items: center;
  padding: 0 47px 3px 52px;
  background: #fff;
  position: relative;
  z-index: 2;
  box-shadow: 0 3px 18px rgba(0, 0, 0, .07);
}
.burger { width: 40px; display: flex; flex-direction: column; gap: 14px; }
.burger i { display: block; height: 5px; background: #3d4759; }
.logo-pin { width: 70px; height: 82px; margin-left: 39px; }
.wordmark {
  margin-left: 16px;
  font-family: Lato, sans-serif;
  font-weight: 700;
  font-size: 74px;
  letter-spacing: -2px;
  color: #3b5fd4;
  margin-top: -18px;
}
.search-btn {
  margin-left: auto;
  width: 263px;
  height: 94px;
  border: 0;
  border-radius: 22px;
  background: #2966e8;
  color: #fff;
  font-family: Inter, sans-serif;
  font-weight: 600;
  font-size: 37px;
  display: flex;
  align-items: center;
  padding: 0 0 0 36px;
  gap: 28px;
}
.search-icon { width: 42px; height: 42px; }
.avatar {
  width: 90px;
  height: 90px;
  margin-left: 18px;
  border-radius: 50%;
  background: #62a5fb;
  box-shadow: inset 0 0 0 2px #62a5fb, inset 0 0 0 3px rgba(255, 255, 255, .35);
  display: flex;
  align-items: center;
  justify-content: center;
  color: #fff;
  font-family: Inter, sans-serif;
  font-weight: 600;
  font-size: 34px;
}

/* main */
.main {
  flex: 1;
  min-height: 0;
  position: relative;
  overflow: hidden;
  background: linear-gradient(90deg, #f6f6f6, #fff 22px);
}
.article {
  padding-left: 462px;
  width: 1590px;
  margin-top: -31px;
  font-size: 40.500px;
  line-height: 60.750px;
}
.clause { list-style: none; margin: 0; padding: 0 0 0 58px; }
.item { display: flex; margin-bottom: 42.500px; }
.item:last-child { margin-bottom: 0; }
.item-label { width: 89px; flex: none; font-size: 37px; line-height: 56px; }
.item-cont { padding-left: 89px; }
.item-text { flex: 1; }
sup { font-size: .72em; line-height: 0; }
.ref { color: #7b7f85; }
.sec-title { margin: 164px 0 0; font-size: 42.200px; line-height: 61px; font-weight: 700; }
.para { margin: 43px 0 30px; }
.next-title {
  margin: 160px 0 0 -104px;
  font-size: 42.200px;
  line-height: 61px;
  font-weight: 700;
  white-space: nowrap;
}
.side-toggle {
  position: absolute;
  left: 0;
  top: 21px;
  width: 94px;
  height: 94px;
  border-radius: 0 46px 46px 0;
  background: #36506f;
  box-shadow: inset -1px 0 0 1px #5a708c;
  display: flex;
  align-items: center;
  padding-left: 38px;
}
.side-toggle svg { width: 17px; height: 30px; }
.scroll-thumb {
  position: absolute;
  right: 0;
  top: 564px;
  width: 25px;
  height: 69px;
  background: #d8d8d8;
}

/* recorder */
.recorder {
  position: absolute;
  right: 0;
  bottom: 0;
  width: 394px;
  height: 189px;
  border-radius: 95px 0 0 95px;
  background: linear-gradient(90deg, #2a22f7 6%, #8a2ba0 50%, #ff3c50 92%);
  display: flex;
  align-items: center;
  padding-left: 27px;
  color: #fff;
  font-family: Roboto, sans-serif;
}
.rec-stars { position: absolute; inset: 0; width: 394px; height: 189px; }
.rec-ring {
  width: 130px;
  height: 130px;
  border-radius: 50%;
  border: 4px solid rgba(255, 255, 255, .62);
  display: flex;
  align-items: center;
  justify-content: center;
  position: relative;
}
.rec-mic { width: 50px; height: 60px; margin-left: 5px; }
.rec-text {
  width: 146px;
  margin: 5px 0 0 14px;
  font-size: 35px;
  line-height: 41.500px;
  overflow-wrap: anywhere;
  position: relative;
}
.rec-arrows {
  margin-left: 19px;
  display: flex;
  flex-direction: column;
  gap: 39px;
  position: relative;
}
.rec-arrows svg { width: 26px; height: 45px; }

/* dock */
.dock {
  height: 126px;
  flex: none;
  border-top: 3px solid #3c3f49;
  background: #121418;
  display: flex;
  align-items: center;
  gap: 46px;
  padding: 0 0 5px 272px;
}
.folder {
  width: 83px;
  height: 84px;
  flex: none;
  border-radius: 38%;
  background: #47474e;
  padding: 11px;
  display: grid;
  grid-template-columns: repeat(3, 17px);
  grid-auto-rows: 17px;
  gap: 5px;
  align-content: start;
}
.mini { width: 17px; height: 17px; }
.apps, .phone, .insta {
  width: 82px;
  height: 82px;
  flex: none;
  border-radius: 40%;
  display: flex;
  align-items: center;
  justify-content: center;
}
.apps { background: #4d6679; margin-left: 1px; }
.apps svg { width: 44px; height: 42px; }
.dock-sep { width: 2px; height: 52px; flex: none; background: #777a80; margin: 0 -13px 0 -11px; }
.phone { background: #0da25e; }
.phone svg { width: 30px; height: 54px; }
.insta { background: linear-gradient(180deg, #7a2ff0 0, #d6007f 38%, #f0406a 62%, #f58a20 82%, #f0c800 100%); }
.insta svg { width: 58px; height: 58px; }
.nav-recents { width: 37px; height: 38px; margin-left: 63px; }
.nav-home {
  width: 40px;
  height: 40px;
  flex: none;
  margin-left: 103px;
  border: 3px solid #f0f0f2;
  border-radius: 14px;
}
.nav-back { width: 24px; height: 42px; margin-left: 110px; }
```
